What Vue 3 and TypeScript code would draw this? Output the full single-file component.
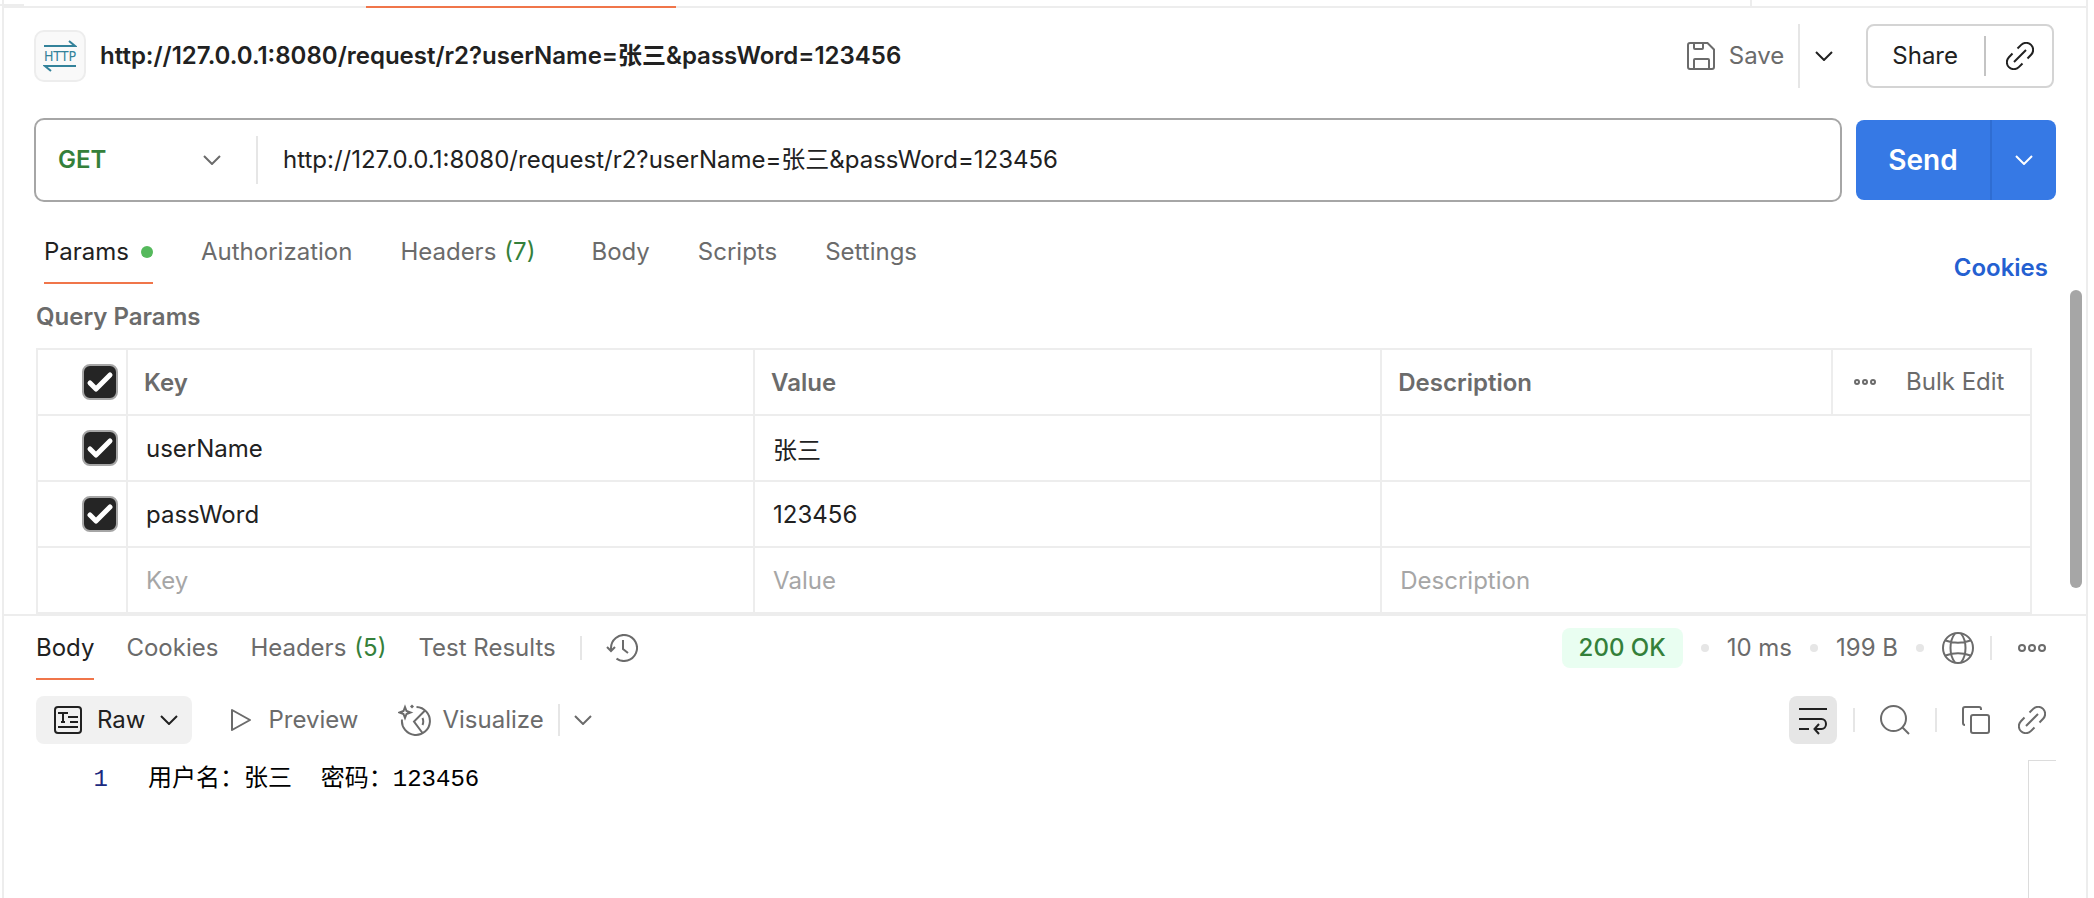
<script setup lang="ts">
import { computed, ref } from 'vue'

interface Param {
  id: number
  enabled: boolean
  key: string
  value: string
  description: string
}

interface Tab {
  name: string
  count?: number
  dot?: boolean
}

const method = ref('GET')
const methods = ['GET', 'POST', 'PUT', 'PATCH', 'DELETE']

const params = ref<Param[]>([
  { id: 1, enabled: true, key: 'userName', value: '张三', description: '' },
  { id: 2, enabled: true, key: 'passWord', value: '123456', description: '' },
])
const draft = ref({ key: '', value: '', description: '' })

const url = ref('http://127.0.0.1:8080/request/r2?userName=张三&passWord=123456')

const allEnabled = computed({
  get: () => params.value.every((p) => p.enabled),
  set: (on: boolean) => params.value.forEach((p) => (p.enabled = on)),
})

const requestTabs: Tab[] = [
  { name: 'Params', dot: true },
  { name: 'Authorization' },
  { name: 'Headers', count: 7 },
  { name: 'Body' },
  { name: 'Scripts' },
  { name: 'Settings' },
]
const activeRequestTab = ref('Params')

const responseTabs: Tab[] = [
  { name: 'Body' },
  { name: 'Cookies' },
  { name: 'Headers', count: 5 },
  { name: 'Test Results' },
]
const activeResponseTab = ref('Body')

const lines = ['用户名：张三  密码：123456']
</script>

<template>
  <svg class="sprite" aria-hidden="true">
    <symbol id="i-chevron" viewBox="0 0 18 10"><path d="M1 1l8 8 8-8" /></symbol>
    <symbol id="i-link" viewBox="0 0 28 28">
      <path d="M11.5 6.5L15.2 2.9A7 7 0 0 1 25.1 12.8L21.5 16.5M6.5 11.5L2.9 15.2A7 7 0 0 0 12.8 25.1L16.5 21.5M8 20L20 8" />
    </symbol>
  </svg>

  <div class="page">
    <div class="strip">
      <span class="strip-rest"></span>
      <span class="strip-active"></span>
      <span class="strip-rest"></span>
      <span class="strip-rest strip-end"></span>
    </div>

    <header class="title-bar">
      <span class="http-badge">
        <svg width="34" height="32" viewBox="0 0 34 32" aria-hidden="true">
          <path d="M1 6H32L26 1M33 26H2L8 31" />
          <text x="17" y="21" text-anchor="middle">HTTP</text>
        </svg>
      </span>
      <h1>{{ url }}</h1>
      <button class="save" type="button">
        <svg width="28" height="28" viewBox="0 0 28 28" aria-hidden="true">
          <path d="M3 1H20.5L27 7.5V25a2 2 0 0 1-2 2H3a2 2 0 0 1-2-2V3a2 2 0 0 1 2-2zM7 1v5a1 1 0 0 0 1 1h7a1 1 0 0 0 1-1V1M7 27v-9a1 1 0 0 1 1-1h13a1 1 0 0 1 1 1v9" />
        </svg>
        Save
      </button>
      <button class="save-more" type="button" aria-label="Save options">
        <svg class="chevron"><use href="#i-chevron" /></svg>
      </button>
      <div class="share">
        <button type="button">Share</button>
        <button class="share-link" type="button" aria-label="Copy link">
          <svg width="28" height="28"><use href="#i-link" /></svg>
        </button>
      </div>
    </header>

    <div class="request-line">
      <div class="url-box">
        <div class="method">
          <select v-model="method" aria-label="Method">
            <option v-for="m in methods" :key="m">{{ m }}</option>
          </select>
          <svg class="chevron"><use href="#i-chevron" /></svg>
        </div>
        <input v-model="url" class="url" type="text" aria-label="Request URL" />
      </div>
      <div class="send">
        <button class="send-main" type="button">Send</button>
        <button class="send-more" type="button" aria-label="Send options">
          <svg class="chevron"><use href="#i-chevron" /></svg>
        </button>
      </div>
    </div>

    <nav class="request-tabs">
      <button
        v-for="t in requestTabs"
        :key="t.name"
        type="button"
        class="tab"
        :class="{ active: t.name === activeRequestTab }"
        @click="activeRequestTab = t.name"
      >
        {{ t.name }}
        <span v-if="t.dot" class="tab-dot"></span>
        <span v-if="t.count" class="count">({{ t.count }})</span>
      </button>
      <a class="cookies" href="#cookies">Cookies</a>
    </nav>

    <section class="params">
      <h2>Query Params</h2>
      <table>
        <colgroup>
          <col class="c-check" />
          <col class="c-field" />
          <col class="c-field" />
          <col />
          <col class="c-tools" />
        </colgroup>
        <thead>
          <tr>
            <td class="check"><input v-model="allEnabled" type="checkbox" aria-label="Enable all" /></td>
            <th>Key</th>
            <th>Value</th>
            <th>Description</th>
            <td>
              <div class="tools">
                <button type="button" aria-label="Columns">
                  <svg width="22" height="8" viewBox="0 0 22 8" aria-hidden="true">
                    <circle cx="3" cy="4" r="2" /><circle cx="11" cy="4" r="2" /><circle cx="19" cy="4" r="2" />
                  </svg>
                </button>
                <button type="button">Bulk Edit</button>
              </div>
            </td>
          </tr>
        </thead>
        <tbody>
          <tr v-for="p in params" :key="p.id">
            <td class="check"><input v-model="p.enabled" type="checkbox" :aria-label="'Enable ' + p.key" /></td>
            <td><input v-model="p.key" class="cell" type="text" aria-label="Key" /></td>
            <td><input v-model="p.value" class="cell" type="text" aria-label="Value" /></td>
            <td colspan="2"><input v-model="p.description" class="cell" type="text" aria-label="Description" /></td>
          </tr>
          <tr>
            <td></td>
            <td><input v-model="draft.key" class="cell" type="text" placeholder="Key" aria-label="New key" /></td>
            <td><input v-model="draft.value" class="cell" type="text" placeholder="Value" aria-label="New value" /></td>
            <td colspan="2"><input v-model="draft.description" class="cell" type="text" placeholder="Description" aria-label="New description" /></td>
          </tr>
        </tbody>
      </table>
      <span class="scroll-thumb"></span>
    </section>

    <section class="response">
      <div class="response-tabs">
        <button
          v-for="t in responseTabs"
          :key="t.name"
          type="button"
          class="tab"
          :class="{ active: t.name === activeResponseTab }"
          @click="activeResponseTab = t.name"
        >
          {{ t.name }}
          <span v-if="t.count" class="count">({{ t.count }})</span>
        </button>
        <span class="rule history-rule"></span>
        <button type="button" aria-label="History">
          <svg width="32" height="28" viewBox="0 0 32 28" aria-hidden="true">
            <path d="M5 17V14A13 13 0 1 1 10.5 24.6M1 13l4 4 4-4M17 6v9l5 4" />
          </svg>
        </button>
        <div class="status">
          <span class="ok">200 OK</span>
          <i class="sep"></i>
          <span>10 ms</span>
          <i class="sep"></i>
          <span>199 B</span>
          <i class="sep"></i>
          <button type="button" aria-label="Network">
            <svg width="32" height="32" viewBox="0 0 32 32" aria-hidden="true">
              <circle cx="16" cy="16" r="15" />
              <path d="M13 1.5C7 9 7 23 13 30.5M19 1.5C25 9 25 23 19 30.5M3.5 8.5Q16 13 28.5 8.5M3.5 23.5Q16 19 28.5 23.5" />
            </svg>
          </button>
          <span class="rule"></span>
          <button class="more" type="button" aria-label="More actions">
            <svg width="28" height="8" viewBox="0 0 28 8" aria-hidden="true">
              <circle cx="4" cy="4" r="3" /><circle cx="14" cy="4" r="3" /><circle cx="24" cy="4" r="3" />
            </svg>
          </button>
        </div>
      </div>

      <div class="view-bar">
        <button class="raw" type="button">
          <svg width="28" height="28" viewBox="0 0 28 28" aria-hidden="true">
            <rect x="1" y="1" width="26" height="26" rx="3" />
            <path d="M4 7H14M9 7V16M7 16H11M14 11H24M16 16H24M4 21H24" />
          </svg>
          Raw
          <svg class="chevron"><use href="#i-chevron" /></svg>
        </button>
        <button class="preview" type="button">
          <svg width="22" height="24" viewBox="0 0 22 24" aria-hidden="true">
            <path d="M2 2L20 12L2 22Z" />
          </svg>
          Preview
        </button>
        <button class="visualize" type="button">
          <svg width="34" height="32" viewBox="0 0 34 32" aria-hidden="true">
            <path d="M18.5 3A14 14 0 1 1 4 15.5M26.5 7L16 17.5L24.5 29M24.5 14Q26 17.5 24.5 21" />
            <path d="M7 3L8.5 7L12.5 8.5L8.5 10L7 14L5.5 10L1.5 8.5L5.5 7Z" />
            <path class="solid" d="M14 0.5L16 2.5L14 4.5L12 2.5Z" />
          </svg>
          Visualize
        </button>
        <button class="visualize-more" type="button" aria-label="Visualize options">
          <svg class="chevron"><use href="#i-chevron" /></svg>
        </button>
        <div class="tools-right">
          <button class="wrap" type="button" aria-label="Wrap lines">
            <svg width="28" height="30" viewBox="0 0 28 30" aria-hidden="true">
              <path d="M0 4H28M0 14H22.5a4.5 5 0 0 1 0 10H16M20 19L15.5 24L20 29M0 24H10" />
            </svg>
          </button>
          <span class="rule"></span>
          <button type="button" aria-label="Search">
            <svg width="30" height="30" viewBox="0 0 30 30" aria-hidden="true">
              <circle cx="13.5" cy="13.5" r="12.5" /><path d="M22 22L29 29" />
            </svg>
          </button>
          <span class="rule"></span>
          <button type="button" aria-label="Copy">
            <svg width="28" height="28" viewBox="0 0 28 28" aria-hidden="true">
              <path d="M19 4V3a2 2 0 0 0-2-2H3a2 2 0 0 0-2 2V17a2 2 0 0 0 2 2" />
              <rect x="9" y="9" width="18" height="18" rx="2" />
            </svg>
          </button>
          <button class="link" type="button" aria-label="Response link">
            <svg width="28" height="28"><use href="#i-link" /></svg>
          </button>
        </div>
      </div>

      <div class="editor">
        <ol>
          <li v-for="(line, i) in lines" :key="i">
            <span class="line-no">{{ i + 1 }}</span><code>{{ line }}</code>
          </li>
        </ol>
        <span class="overview"></span>
      </div>
    </section>
  </div>
</template>

<style>
body {
  background: #fff;
}
</style>

<style scoped>
* {
  box-sizing: border-box;
}
.sprite {
  position: absolute;
  width: 0;
  height: 0;
}
.page {
  position: relative;
  display: flex;
  flex-direction: column;
  min-height: 100vh;
  margin: 0 6px 0 2px;
  border: solid #ededed;
  border-width: 0 2px;
  color: #212121;
  font: 24px/32px Inter, "Noto Sans CJK SC", sans-serif;
}
.page::before {
  content: "";
  position: absolute;
  top: 4px;
  left: -4px;
  width: 24px;
  height: 2px;
  background: #ededed;
}
button,
input,
select {
  margin: 0;
  padding: 0;
  border: 0;
  background: none;
  color: inherit;
  font: inherit;
}
button {
  display: flex;
  align-items: center;
  white-space: nowrap;
}
svg {
  flex: none;
  fill: none;
  stroke: currentColor;
  stroke-width: 2;
}
.chevron {
  width: 18px;
  height: 10px;
}
.rule {
  width: 2px;
  height: 24px;
  background: #e6e6e6;
}

.strip {
  display: grid;
  grid-template-columns: 362px 310px 1fr 336px;
  height: 8px;
}
.strip-rest {
  border-bottom: 2px solid #ededed;
}
.strip-active {
  border-bottom: 2px solid #f0754a;
}
.strip-end {
  background: linear-gradient(#ededed, #ededed) left / 2px 100% no-repeat;
}

.title-bar {
  display: flex;
  align-items: center;
  padding: 16px 32px 0 30px;
}
.http-badge {
  display: grid;
  place-items: center;
  width: 52px;
  height: 52px;
  border: 2px solid #ededed;
  border-radius: 10px;
  background: #f9f9f9;
  color: #33829a;
}
.http-badge text {
  fill: currentColor;
  stroke: none;
  font: 14px "Liberation Sans Narrow", "DejaVu Sans Condensed", sans-serif;
}
h1 {
  flex: 1;
  margin: 0 0 0 14px;
  font-size: 24px;
  font-weight: 600;
}
.save {
  gap: 14px;
  height: 64px;
  padding-right: 14px;
  border-right: 2px solid #e6e6e6;
  color: #6b6b6b;
}
.save-more {
  height: 64px;
  padding: 0 33px 0 15px;
}
.share {
  display: flex;
  align-items: center;
  height: 64px;
  border: 2px solid #d4d4d4;
  border-radius: 8px;
}
.share button {
  height: 40px;
  padding: 0 26px 0 24px;
}
.share .share-link {
  padding: 0 18px 0 20px;
  border-left: 2px solid #c4c4c4;
}

.request-line {
  display: flex;
  align-items: center;
  gap: 14px;
  padding: 30px 30px 0;
}
.url-box {
  display: flex;
  flex: 1;
  align-items: center;
  height: 84px;
  border: 2px solid #a6a6a6;
  border-radius: 10px;
}
.method {
  position: relative;
  display: flex;
  align-items: center;
  width: 222px;
  height: 48px;
  border-right: 2px solid #e6e6e6;
  color: #6b6b6b;
}
.method select {
  width: 100%;
  padding-left: 22px;
  appearance: none;
  color: #34803a;
  font-weight: 600;
}
.method .chevron {
  position: absolute;
  right: 35px;
  pointer-events: none;
}
.url {
  flex: 1;
  min-width: 0;
  padding: 0 25px;
}
.send {
  display: flex;
  height: 80px;
  overflow: hidden;
  border-radius: 8px;
  background: #3679e5;
  color: #fff;
}
.send-main {
  justify-content: center;
  width: 134px;
  font-size: 28px;
  font-weight: 600;
}
.send-more {
  justify-content: center;
  width: 66px;
  border-left: 2px solid #2f6dd2;
}

.tab {
  color: #6b6b6b;
  border-bottom: 2px solid transparent;
}
.tab.active {
  border-color: #f0754a;
  color: #212121;
}
.tab-dot {
  width: 12px;
  height: 12px;
  margin-left: 12px;
  border-radius: 50%;
  background: #55b95c;
}
.count {
  margin-left: 8px;
  color: #34803a;
}
.request-tabs {
  display: flex;
  align-items: flex-end;
  gap: 48px;
  padding: 20px 38px 0 40px;
}
.request-tabs .tab {
  height: 62px;
}
.request-tabs .count {
  margin-right: 8px;
}
.cookies {
  margin-left: auto;
  color: #2460d1;
  font-weight: 600;
  text-decoration: none;
}

.params {
  position: relative;
  padding: 17px 54px 0 32px;
}
h2 {
  margin: 0 0 15px;
  color: #6b6b6b;
  font-size: 24px;
  font-weight: 600;
}
table {
  width: 100%;
  border: solid #ededed;
  border-width: 2px 0 0 2px;
  border-spacing: 0;
  table-layout: fixed;
}
.c-check {
  width: 90px;
}
.c-field {
  width: 31.45%;
}
.c-tools {
  width: 199px;
}
th,
td {
  height: 66px;
  padding: 0;
  border: solid #ededed;
  border-width: 0 2px 2px 0;
}
th {
  padding: 2px 0 0 16px;
  color: #6b6b6b;
  font-weight: 600;
  text-align: left;
}
.cell {
  display: block;
  width: 100%;
  height: 64px;
  padding: 0 18px;
}
.cell::placeholder {
  color: #a6a6a6;
  opacity: 1;
}
.check {
  padding-right: 8px;
}
.check input {
  display: block;
  width: 36px;
  height: 36px;
  margin-left: auto;
  appearance: none;
  border: 2px solid #a6a6a6;
  border-radius: 8px;
}
.check input:checked {
  background: #252525 url("data:image/svg+xml,%3Csvg xmlns='http://www.w3.org/2000/svg' viewBox='0 0 32 32'%3E%3Cpath d='M6 17l6 6L26 9' fill='none' stroke='white' stroke-width='5' stroke-linecap='round' stroke-linejoin='round'/%3E%3C/svg%3E") center / 32px;
}
.tools {
  display: flex;
  align-items: center;
  gap: 30px;
  padding-left: 21px;
  color: #6b6b6b;
}
.scroll-thumb {
  position: absolute;
  top: 6px;
  right: 4px;
  bottom: 26px;
  width: 12px;
  border-radius: 6px;
  background: #a6a6a6;
}

.response {
  display: flex;
  flex: 1;
  flex-direction: column;
  border-top: 2px solid #ededed;
}
.response-tabs {
  display: flex;
  align-items: center;
  gap: 32px;
  height: 64px;
  padding: 0 40px 0 32px;
  color: #6b6b6b;
}
.response-tabs .tab {
  height: 64px;
  border-top: 2px solid transparent;
}
.response-tabs .history-rule {
  margin: 0 -8px;
}
.status {
  display: flex;
  align-items: center;
  gap: 16px;
  margin-left: auto;
}
.ok {
  height: 40px;
  padding: 4px 17px;
  border-radius: 8px;
  background: #e9fef1;
  color: #34803a;
  font-weight: 500;
}
.sep {
  width: 8px;
  height: 8px;
  margin: 0 2px;
  border-radius: 50%;
  background: #e6e6e6;
}
.more {
  margin-left: 10px;
}
.view-bar {
  display: flex;
  align-items: center;
  height: 48px;
  margin-top: 16px;
  padding: 0 40px 0 32px;
  color: #6b6b6b;
}
.raw {
  gap: 15px;
  height: 48px;
  padding: 0 14px 0 18px;
  border-radius: 8px;
  background: #f1f1f1;
  color: #212121;
}
.preview {
  gap: 16px;
  margin-left: 38px;
}
.preview svg {
  stroke-linejoin: round;
}
.visualize {
  gap: 10px;
  height: 32px;
  margin-left: 40px;
  padding-right: 14px;
  border-right: 2px solid #e6e6e6;
}
.visualize .solid {
  fill: currentColor;
  stroke: none;
}
.visualize-more {
  padding: 8px 14px;
}
.tools-right {
  display: flex;
  align-items: center;
  margin-left: auto;
}
.tools-right .rule {
  margin: 0 25px 0 16px;
}
.tools-right .rule + button + .rule {
  margin-left: 25px;
}
.wrap {
  height: 48px;
  padding: 0 10px;
  border-radius: 8px;
  background: #e6e6e6;
  color: #212121;
}
.link {
  margin-left: 28px;
}

.editor {
  display: flex;
  flex: 1;
  justify-content: space-between;
  margin-top: 16px;
  padding-right: 30px;
}
ol {
  margin: 0;
  padding: 2px 0 0;
  list-style: none;
}
li {
  display: flex;
  color: #000;
  font: 24px/36px "Liberation Mono", "Noto Sans CJK SC", monospace;
}
.line-no {
  width: 104px;
  color: #1a2a80;
  text-align: right;
}
code {
  margin-left: 40px;
  font: inherit;
  white-space: pre;
}
.overview {
  width: 28px;
  border: solid #dcdcdc;
  border-width: 1px 0 0 1px;
}
</style>
